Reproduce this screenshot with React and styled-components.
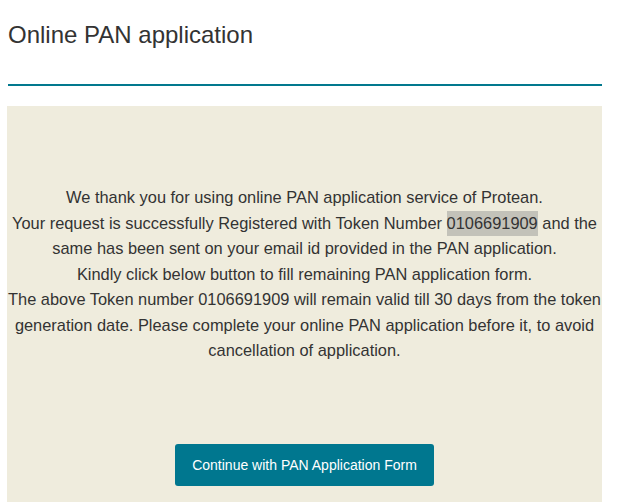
import styled, { createGlobalStyle } from "styled-components";

const GlobalStyle = createGlobalStyle`
  html, body {
    margin: 0;
    padding: 0;
    overflow: hidden;
    background: #ffffff;
  }
  body {
    font-family: "Liberation Sans", Arial, sans-serif;
    color: #333333;
  }
`;

const Page = styled.div`
  padding: 0 20px 0 7px;
  height: 502px;
  display: flex;
  flex-direction: column;
`;

const Heading = styled.h1`
  margin: 21px 0 0 1px;
  font-size: 24px;
  line-height: 27px;
  font-weight: 400;
  color: #333333;
  padding-bottom: 36px;
  border-bottom: 2px solid #02798e;
`;

const Panel = styled.div`
  margin-top: 20px;
  flex: 1;
  background: #efecdd;
  display: flex;
  flex-direction: column;
  align-items: center;
  padding-top: 79px;
`;

const Message = styled.p`
  margin: 0;
  font-size: 16.4px;
  line-height: 25.5px;
  text-align: center;
  color: #333333;
`;

// selected token fills the whole line box, like a text selection
const Token = styled.span`
  display: inline-block;
  line-height: 25.5px;
  background: #c3c2b9;
`;

const Button = styled.button`
  margin-top: 80px;
  height: 42px;
  padding: 0 17px;
  border: none;
  border-radius: 3px;
  background: #00778f;
  color: #ffffff;
  font-family: "Liberation Sans", Arial, sans-serif;
  font-size: 14px;
  cursor: pointer;
`;

function App() {
  const token = "0106691909";
  return (
    <Page>
      <GlobalStyle />
      <Heading>Online PAN application</Heading>
      <Panel>
        <Message>
          We thank you for using online PAN application service of Protean.
          <br />
          Your request is successfully Registered with Token Number{" "}
          <Token>{token}</Token> and the same has been sent on your email id
          provided in the PAN application.
          <br />
          Kindly click below button to fill remaining PAN application form.
          <br />
          The above Token number {token} will remain valid till 30 days from
          the token generation date. Please complete your online PAN
          application before it, to avoid cancellation of application.
        </Message>
        <Button>Continue with PAN Application Form</Button>
      </Panel>
    </Page>
  );
}

export default App;
